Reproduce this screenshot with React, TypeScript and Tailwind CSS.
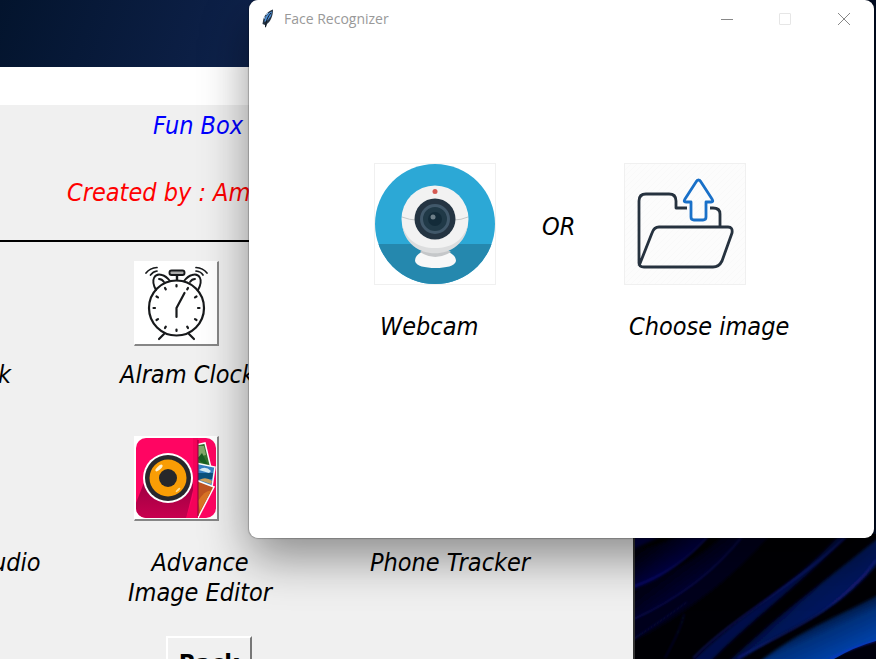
import React from "react";

const label = "font-['DejaVu_Sans_Condensed','DejaVu_Sans',sans-serif] text-[25px] leading-[30px] italic whitespace-nowrap";
const raised = "block size-[85px] border-t border-l border-r-2 border-b-2 border-t-white border-l-white border-r-[#868686] border-b-[#868686] bg-white";

function Wallpaper() {
  return (
    <svg className="absolute right-0 bottom-0 h-[125px] w-[244px]" viewBox="0 0 244 125" preserveAspectRatio="none" aria-hidden="true">
      <defs>
        <linearGradient id="w1" gradientUnits="userSpaceOnUse" x1="25" y1="0" x2="58" y2="42">
          <stop offset="0" stopColor="#000008" />
          <stop offset="1" stopColor="#03066a" />
        </linearGradient>
        <linearGradient id="w1b" gradientUnits="userSpaceOnUse" x1="42" y1="25" x2="68" y2="60">
          <stop offset="0" stopColor="#00000c" />
          <stop offset="1" stopColor="#02043f" />
        </linearGradient>
        <linearGradient id="w2" gradientUnits="userSpaceOnUse" x1="155" y1="52" x2="186" y2="86">
          <stop offset="0" stopColor="#000006" />
          <stop offset=".55" stopColor="#031457" />
          <stop offset="1" stopColor="#07125f" />
        </linearGradient>
        <linearGradient id="w3" gradientUnits="userSpaceOnUse" x1="190" y1="72" x2="212" y2="120">
          <stop offset="0" stopColor="#000008" />
          <stop offset=".5" stopColor="#02307c" />
          <stop offset="1" stopColor="#0442aa" />
        </linearGradient>
        <filter id="soft" x="-10%" y="-10%" width="120%" height="120%"><feGaussianBlur stdDeviation="1.6" /></filter>
        <filter id="glow" x="-10%" y="-10%" width="120%" height="120%"><feGaussianBlur stdDeviation="0.8" /></filter>
      </defs>
      <rect width="244" height="125" fill="#000004" />
      <g filter="url(#soft)">
        <path d="M-5 110V55C45 42 85 20 118 -4H142C112 32 65 75 -5 110Z" fill="#00001d" />
        <path d="M-5 88V53C40 42 80 15 98 -5H119C80 40 45 65 -5 88Z" fill="url(#w1b)" />
        <path d="M-5 58V17C20 15 45 5 52 -5H83C55 25 30 45 -5 58Z" fill="url(#w1)" />
        <path d="M-5 -5H38C25 6 12 9 -5 19Z" fill="#000640" />
        <path d="M58 130C108 78 162 54 216 -8H224C180 42 118 86 76 130Z" fill="#050a49" />
        <path d="M94 130C145 82 195 45 252 0V22C232 47 211 66 185 81C158 97 129 110 103 130Z" fill="url(#w2)" />
        <path d="M120 134C166 96 206 83 252 58V108C228 112 210 123 198 134Z" fill="url(#w3)" />
      </g>
      <path d="M202 125Q222 113 244 107V125Z" fill="#00000c" />
      <g fill="none" strokeWidth="1.5" opacity=".6" filter="url(#glow)">
        <path d="M0 53C33 42 59 22 78 0" stroke="#161ca0" />
        <path d="M0 86C44 66 83 38 112 0" stroke="#11166f" />
        <path d="M0 106Q32 85 55 68" stroke="#0b0d54" />
        <path d="M61 124C107 78 167 49 217 0" stroke="#1b2496" />
        <path d="M106 124C142 102 201 85 244 26" stroke="#20259c" />
        <path d="M198 125Q221 113 244 107" stroke="#1c2ce0" />
        <path d="M33 124Q50 93 52 80" stroke="#0c0e48" />
      </g>
    </svg>
  );
}

function AlarmIcon() {
  return (
    <svg viewBox="0 0 82 82" className="size-full" fill="none" stroke="#17191b" strokeWidth="1.9" strokeLinecap="round" aria-hidden="true">
      <path d="M21 28C15 17 20 11 27 13Q31 14 35 19M63 28C69 17 64 11 57 13Q53 14 49 19" />
      <path d="M24 17Q27 17 29 20M60 17Q57 17 55 20" />
      <path d="M42 13V18" strokeWidth="2.4" />
      <rect x="34.500" y="8.500" width="15" height="4.500" rx="2" fill="#aaa" />
      <circle cx="41.500" cy="46" r="27.500" strokeWidth="2.200" />
      <path d="M41.500 55V46L49.500 31" strokeWidth="2.200" />
      <path d="M41.500 23V24.500M41.500 67.500V69M18.500 46H20M63 46H64.500M30 26L30.800 27.400M53 26L52.200 27.400M21.500 34.500L23 35.400M61.500 34.500L60 35.400M21.500 58L23 57.100M61.500 58L60 57.100M30 66L30.800 64.600M53 66L52.200 64.600" strokeWidth="2.200" />
      <path d="M29 72L24 77M54 72L59 77" strokeWidth="2.200" />
      <path d="M11 11Q15 6 22 5.500M15.500 13Q18 9.500 22 9M61 5.500Q68 6 72 11M61 9Q66 9.500 68 13" strokeWidth="1.700" />
    </svg>
  );
}

function EditorIcon() {
  return (
    <svg viewBox="0 0 82 82" className="size-full" aria-hidden="true">
      <defs>
        <clipPath id="ec"><rect x="1" y="1" width="80" height="80" rx="10" /></clipPath>
        <linearGradient id="es" x1="0" y1="0" x2="0" y2="1"><stop offset=".3" stopColor="#a80045" /><stop offset="1" stopColor="#c9004f" /></linearGradient>
        <clipPath id="photos"><rect x="63" y="0" width="19" height="82" /></clipPath>
      </defs>
      <g clipPath="url(#ec)">
        <rect width="82" height="82" fill="#ff0562" />
        <path d="M10 43L1 66V82H51L60 45Z" fill="url(#es)" />
        <path d="M58 0H63V82H51L58 60Z" fill="#f40259" />
      </g>
      <g clipPath="url(#photos)" strokeLinejoin="miter">
        <path d="M60 8L70 6L76 31L60 27Z" fill="#32732d" stroke="#fff" strokeWidth="1.500" />
        <path d="M63 9L69 9L71 18L63 20Z" fill="#81a969" />
        <path d="M63 21L67 16L73 28L66 25Z" fill="#175f22" />
        <path d="M60 26L80 30L77 50L60 46Z" fill="#3682c4" stroke="#fff" strokeWidth="1.500" />
        <path d="M63 36H78L77 42L63 43Z" fill="#0b517c" />
        <path d="M64 33Q70 28 76 34L74 36Z" fill="#d7edf5" />
        <path d="M64 43Q71 39 77 44L76 47Z" fill="#cda05c" />
        <path d="M58 42L79 50L63 81L58 80Z" fill="#bf5421" stroke="#fff" strokeWidth="1.500" />
        <path d="M63 64Q71 52 76 54L65 74Z" fill="#d97425" />
      </g>
      <path d="M63 3V79" stroke="#8b003d" />
      <circle cx="33" cy="41" r="25" fill="#fff" />
      <circle cx="33" cy="41" r="23" fill="#27282c" />
      <circle cx="33" cy="41" r="18.500" fill="#f99d05" />
      <circle cx="33" cy="41" r="9" fill="#26272a" />
      <ellipse cx="24" cy="31" rx="4.500" ry="1.800" transform="rotate(-42 24 31)" fill="#fff2d2" />
      <ellipse cx="43" cy="53" rx="3" ry="1" transform="rotate(-42 43 53)" fill="#ffe09b" />
    </svg>
  );
}

function WebcamIcon() {
  return (
    <svg viewBox="0 0 120 120" className="size-full" aria-hidden="true">
      <defs><clipPath id="wc"><circle cx="60" cy="60" r="60" /></clipPath></defs>
      <g clipPath="url(#wc)"><rect width="120" height="120" fill="#2ca8d6" /><rect y="80" width="120" height="40" fill="#2588ae" /></g>
      <path d="M40 97C40 91 46 87 52 87H68C74 87 81 91 81 97C80 102 71 104 60.500 104S41 102 40 97Z" fill="#f8f8f8" />
      <path d="M45 88Q60 98 76 88L70 84H50Z" fill="#c5c7c9" />
      <circle cx="60" cy="55" r="33.500" fill="#f2f2f2" />
      <path d="M27 60C31 99 89 99 93 60C89 76 77 84 60 84C43 84 31 76 27 60Z" fill="#dcddde" />
      <path d="M27 53Q35 56 41 56M79 56Q86 56 93 53" stroke="#c4c7c8" fill="none" />
      <circle cx="60" cy="55" r="20.500" fill="#243442" />
      <circle cx="60" cy="55" r="13.500" fill="#203947" stroke="#41586a" strokeWidth="3" />
      <circle cx="60" cy="55" r="7" fill="#132b39" />
      <circle cx="58" cy="53" r="2.500" fill="#6e7f89" />
      <circle cx="60" cy="27.500" r="2.500" fill="#d65a53" />
    </svg>
  );
}

function FolderIcon() {
  return (
    <svg viewBox="0 0 120 120" className="size-full" fill="none" strokeWidth="2.800" strokeLinejoin="round" aria-hidden="true">
      <defs><pattern id="hatch" width="6" height="6" patternUnits="userSpaceOnUse"><path d="M0 6L6 0" stroke="#f9f9f9" strokeWidth="1" /></pattern></defs>
      <rect width="120" height="120" fill="#fcfcfc" />
      <rect width="120" height="120" fill="url(#hatch)" />
      <path d="M95 63V50Q95 44 88 44H85M62 44H51V37Q51 30 44 30H21Q14 30 14 37V99Q14 103 19 103H88Q94 103 97 97L107 69Q108 63 103 63H34Q29 63 27 69L14 102" stroke="#26323f" />
      <path d="M73.500 16Q72 16 71 18L60 35Q58 38 61 38H66V53Q66 56 69 56H78Q81 56 81 53V38H86Q89 38 87 35L76 18Q75 16 73.500 16Z" stroke="#1970c8" />
    </svg>
  );
}

function FeatherIcon() {
  return (
    <svg viewBox="0 0 14 20" className="h-[20px] w-[14px]" aria-hidden="true">
      <path d="M12 .5C7 2 2.500 7 2 12L1.500 15L4 16L4.500 19L6 15C9 13 12 8 12 .5Z" fill="#243344" />
      <path d="M11 2.500C6 4 3.500 9 3.500 13L7 11L10 7Z" fill="#4e91d9" />
      <path d="M10 4Q5 9 4.500 18" stroke="#111820" fill="none" />
      <path d="M4 7L3 10M7 4L5 6" stroke="#9ab9d6" strokeWidth="1" />
    </svg>
  );
}

function FunBoxWindow() {
  return (
    <main className="absolute top-[67px] right-[241px] bottom-0 left-0 overflow-hidden border-r-2 border-[#333] bg-[#f0f0f0]">
      <div className="h-[38px] bg-white" />
      <h1 className={`${label} pt-[6px] pl-[153px] text-[#0000ff]`}>Fun Box</h1>
      <p className={`${label} pt-[37px] pl-[67px] text-[#ff0000]`}>Created by : Ami</p>
      <hr className="mt-[32px] border-0 border-t-2 border-black" />
      <section className="mt-[19px] grid h-[175px] grid-cols-[120px_250px_1fr]">
        <p className={`${label} -ml-[2px] pt-[99px]`}>k</p>
        <div>
          <button aria-labelledby="alarm-label" className={`${raised} ml-[14px]`}><AlarmIcon /></button>
          <p id="alarm-label" className={`${label} mt-[14px]`}>Alram Clock</p>
        </div>
      </section>
      <section className="grid grid-cols-[120px_250px_1fr]">
        <p className={`${label} -ml-[8px] pt-[112px]`}>udio</p>
        <div>
          <button aria-labelledby="editor-label" className={`${raised} ml-[14px]`}><EditorIcon /></button>
          <p id="editor-label" className={`${label} mt-[27px] w-[160px] text-center`}>Advance<br />Image Editor</p>
        </div>
        <p className={`${label} pt-[112px]`}>Phone Tracker</p>
      </section>
      <button className="mt-[28px] ml-[166px] block h-[56px] w-[86px] border-2 border-t-white border-r-[#777] border-b-[#777] border-l-white bg-[#f0f0f0] font-['DejaVu_Sans_Condensed','DejaVu_Sans',sans-serif] text-[25px] leading-[30px] font-bold">Back</button>
    </main>
  );
}

function FaceRecognizer() {
  return (
    <section role="dialog" aria-labelledby="face-title" className="absolute top-0 right-[2px] bottom-[121px] left-[249px] rounded-[9px] bg-white shadow-[0_0_1px_1px_rgba(0,0,0,0.22),0_20px_48px_rgba(0,0,0,0.42)]">
      <header className="flex h-[38px] items-center pl-[12px]">
        <FeatherIcon />
        <h2 id="face-title" className="ml-[9px] flex-1 font-['Open_Sans',sans-serif] text-[14px] leading-[20px] text-[#999]">Face Recognizer</h2>
        <button aria-label="Minimize" className="grid h-full w-[58px] place-items-center"><span className="h-px w-[12px] bg-[#888]" /></button>
        <button aria-label="Maximize" disabled className="grid h-full w-[58px] place-items-center"><span className="size-[12px] rounded-[1px] border border-[#e6e6e6]" /></button>
        <button aria-label="Close" className="grid h-full w-[60px] place-items-center"><svg viewBox="0 0 12 12" className="size-[12px]" stroke="#888" fill="none"><path d="M0 0L12 12M12 0L0 12" /></svg></button>
      </header>
      <div className="flex pt-[125px] pl-[125px]">
        <div className="w-[122px]">
          <button aria-labelledby="webcam-label" className="block size-[122px] border border-[#f0f0f0] bg-white"><WebcamIcon /></button>
          <p id="webcam-label" className={`${label} mt-[27px] pl-[6px]`}>Webcam</p>
        </div>
        <p className={`${label} w-[128px] pt-[49px] pl-[46px]`}>OR</p>
        <div>
          <button aria-labelledby="choose-label" className="block size-[122px] border border-[#f0f0f0] bg-white"><FolderIcon /></button>
          <p id="choose-label" className={`${label} mt-[27px] pl-[5px]`}>Choose image</p>
        </div>
      </div>
    </section>
  );
}

export default function App() {
  return (
    <div className="relative h-screen w-full overflow-hidden bg-[linear-gradient(110deg,#03142d_0px,#102450_290px,#020d24_440px)] text-black">
      <Wallpaper />
      <FunBoxWindow />
      <FaceRecognizer />
    </div>
  );
}
